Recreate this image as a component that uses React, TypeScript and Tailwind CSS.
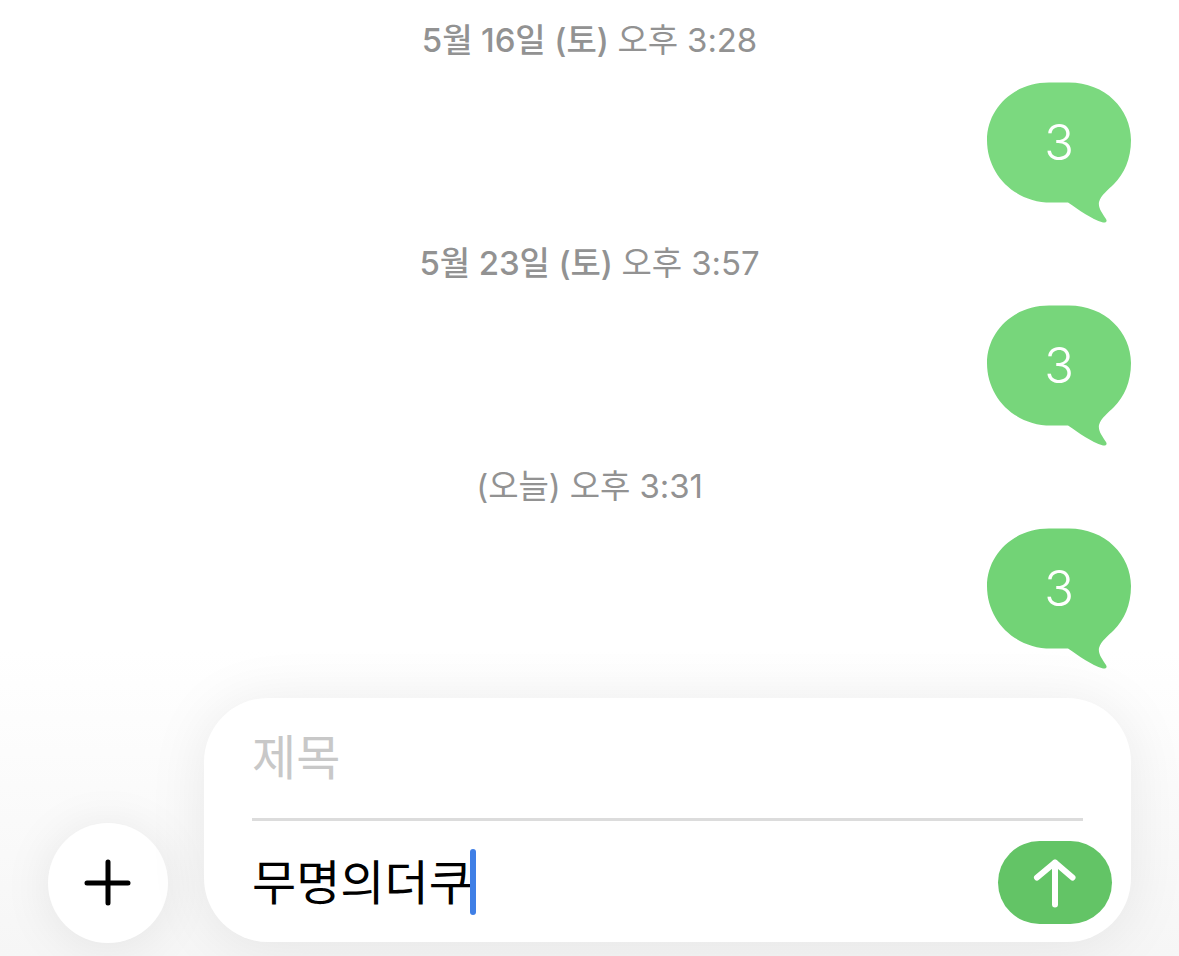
import React from "react";

const Bubble = ({ color }: { color: string }) => (
  <div className="relative flex h-[141px] w-[144px] shrink-0">
    <svg width="144" height="141" viewBox="0 0 144 141" className="absolute inset-0">
      <path
        d="M62 .5H82C118 .5 144 27 144 58C144 77 137 92 127 102C121 108 114 113 112 120C111 126 115 131 119 137C120.500 139.500 119 141 116 140.500C104 137 92 128 81 120.500H64C28 120.500 0 93 0 58C0 27 26 .5 62 .5Z"
        fill={color}
      />
    </svg>
    <span className="relative mx-auto mt-[33px] h-[56px] text-[49px] leading-[56px] font-light text-white">3</span>
  </div>
);

const Stamp = ({ bold, rest, className }: { bold?: string; rest: string; className?: string }) => (
  <div className={`text-center text-[33px] leading-[40px] tracking-[-0.1px] whitespace-nowrap text-[#929292] ${className ?? ""}`}>
    {bold && <span className="font-medium">{bold} </span>}
    <span>{rest}</span>
  </div>
);

const rows = [
  { bold: "5월 16일 (토)", rest: "오후 3:28", color: "#7bd97f" },
  { bold: "5월 23일 (토)", rest: "오후 3:57", color: "#77d67b" },
  { rest: "(오늘) 오후 3:31", color: "#72d376" },
];

export default function App() {
  return (
    <div className="flex h-[956px] w-[1179px] flex-col overflow-hidden bg-[linear-gradient(180deg,#ffffff_68%,#f6f6f6_100%)] font-['Inter','Noto_Sans_CJK_KR',sans-serif]">
      <div className="flex flex-col gap-[20px] pt-[20px] pr-[48px]">
        {rows.map((r) => (
          <div key={r.rest} className="flex flex-col gap-[22px]">
            <Stamp bold={r.bold} rest={r.rest} className="pl-[48px]" />
            <div className="flex justify-end">
              <Bubble color={r.color} />
            </div>
          </div>
        ))}
      </div>
      <div className="mt-[29px] flex items-end gap-[36px] px-[48px]">
        <button className="mb-[13px] flex h-[120px] w-[120px] shrink-0 items-center justify-center rounded-full bg-white shadow-[0_4px_50px_rgba(0,0,0,0.08)]">
          <svg width="48" height="48" viewBox="0 0 48 48" fill="none" stroke="#000" strokeWidth="5" strokeLinecap="round">
            <path d="M24 3V44M3 24H44" />
          </svg>
        </button>
        <div className="mb-[14px] flex h-[244px] w-[927px] flex-col rounded-[64px] bg-white pt-[30px] pr-[19px] pl-[48px] shadow-[0_4px_60px_rgba(0,0,0,0.08)]">
          <div className="mr-[29px] h-[93px] border-b-[3px] border-[#dcdcdc] text-[48px] leading-[60px] text-[#c8c8c8]">제목</div>
          <div className="mt-[20px] flex items-start justify-between">
            <div className="flex items-start">
              <span className="mt-[12px] text-[48px] leading-[60px] text-black">무명의더쿠</span>
              <span className="mt-[8px] ml-[-3px] h-[66px] w-[6px] rounded-full bg-[#3f7fe6]" />
            </div>
            <button className="flex h-[83px] w-[114px] items-center justify-center rounded-[42px] bg-[#63c466]">
              <svg width="44" height="54" viewBox="0 0 44 54" fill="none" stroke="#fff" strokeWidth="6" strokeLinecap="round" strokeLinejoin="round">
                <path d="M22 48.500V6.500M4 21.500L22 6.500L39.500 21.500" />
              </svg>
            </button>
          </div>
        </div>
      </div>
    </div>
  );
}
